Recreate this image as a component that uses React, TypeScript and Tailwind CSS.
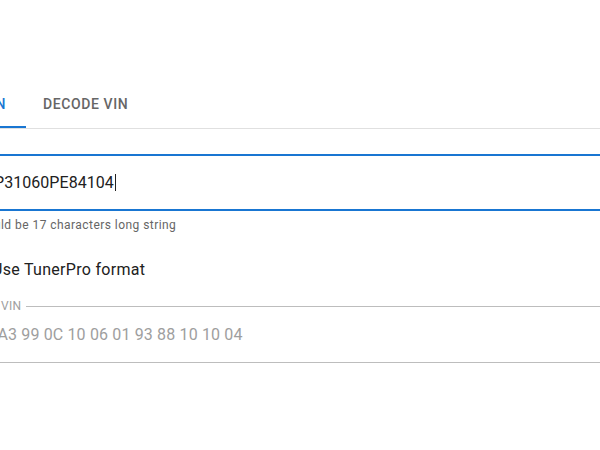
import { useState } from 'react'

const FONT = { fontFamily: 'Roboto, "Liberation Sans", sans-serif' }

function VinTabs() {
  const [tab] = useState(0)
  return (
    <div className="flex h-[49px] w-[700px] border-b border-[#e0e0e0] -ml-[100px]">
      <div className="relative flex h-[48px] w-[126px] items-center justify-center">
        <span className={`text-[14px] font-medium uppercase tracking-[0.6px] ${tab === 0 ? 'text-[#1976d2]' : 'text-[#666666]'}`}>
          Encode VIN
        </span>
        {tab === 0 && <span className="absolute bottom-0 left-0 h-[2px] w-full bg-[#1976d2]" />}
      </div>
      <div className="flex h-[48px] items-center pl-[17px] pr-4">
        <span className="text-[14px] font-medium uppercase tracking-[0.6px] text-[#666666]">Decode VIN</span>
      </div>
    </div>
  )
}

function VinInput() {
  return (
    <div className="mt-[25px] -ml-[39px] w-[700px]">
      <div className="flex h-[57px] items-center rounded border-2 border-[#1976d2] pl-[11px] pr-[12px]">
        <span className="text-[16px] leading-[23px] tracking-[0.05px] text-[#212121]">1GP31060PE84104</span>
        <span className="ml-[1px] h-[17px] w-[1px] bg-[#212121]" />
      </div>
      <p className="mt-[4px] px-[11px] text-[12px] leading-[20px] tracking-[0.45px] text-[#666666]">
        Should be 17 characters long string
      </p>
    </div>
  )
}

function TunerProCheckbox() {
  return (
    <label className="mt-[14px] -ml-[50px] flex h-[42px] items-center">
      <span className="flex h-[42px] w-[42px] items-center justify-center">
        <span className="h-[18px] w-[18px] rounded-[2px] border-2 border-[#757575]" />
      </span>
      <span className="text-[16px] leading-[24px] tracking-[0.3px] text-[#212121]">Use TunerPro format</span>
    </label>
  )
}

function HexField() {
  return (
    <div className="relative mt-[15px] -ml-[39px] flex h-[57px] w-[700px] items-center rounded border border-[#bdbdbd] px-[13px]">
      <span className="absolute -top-[7px] left-[9px] bg-white px-[5px] text-[12px] leading-[12px] tracking-[0.3px] text-[#9e9e9e]">
        Hex VIN
      </span>
      <span className="text-[16px] leading-[23px] tracking-[0.15px] text-[#9e9e9e]">57 A3 99 0C 10 06 01 93 88 10 10 04</span>
    </div>
  )
}

export default function App() {
  return (
    <div className="h-[450px] w-[600px] overflow-hidden bg-white" style={FONT}>
      <div className="flex flex-col items-start pt-[80px]">
        <VinTabs />
        <VinInput />
        <TunerProCheckbox />
        <HexField />
      </div>
    </div>
  )
}
